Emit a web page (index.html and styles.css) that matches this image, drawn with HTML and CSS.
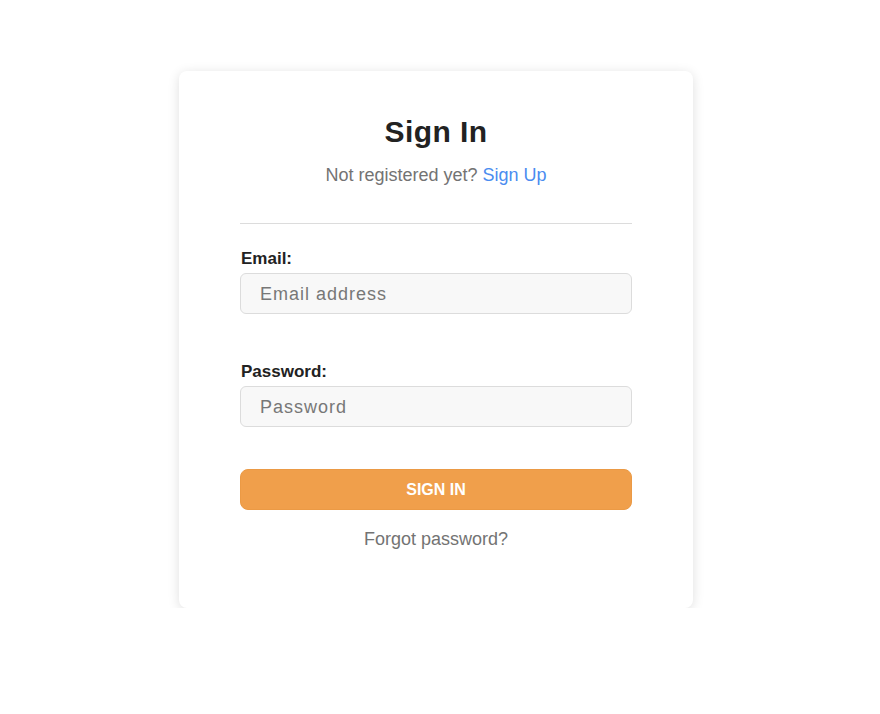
FILE: index.html
```html
<!DOCTYPE html>
<html lang="en">
  <head>
    <meta charset="UTF-8" />
    <meta name="viewport" content="width=device-width, initial-scale=1.0" />
    <title>Sign In</title>
    <link rel="stylesheet" href="styles.css">
  </head>
  <body>
    <div class="card">
      <h1 class="title">Sign In</h1>
      <p class="subtitle">Not registered yet? <a href="#" class="link">Sign Up</a></p>
      <hr class="divider" />
      <form name="signin">
        <label class="field" for="email">Email:</label>
        <input type="email" class="input-box" id="email" name="email" placeholder="Email address" />
        <label class="field field-pw" for="password">Password:</label>
        <input type="password" class="input-box" id="password" name="password" placeholder="Password" />
        <button type="submit" class="submit">SIGN IN</button>
      </form>
      <p class="forgot">Forgot password?</p>
    </div>
  </body>
</html>
```

FILE: styles.css
```css
* {
  padding: 0;
  margin: 0;
  box-sizing: border-box;
}
body {
  background: #fff;
  font-family: "Liberation Sans", Arial, sans-serif;
  color: #222;
}
.card {
  width: 514px;
  margin: 71px 0 0 179px;
  padding: 43px 61px 58px;
  background: #fff;
  border-radius: 8px;
  box-shadow: 0 2px 12px rgba(0, 0, 0, 0.13);
}
.title {
  font-size: 30px;
  line-height: 36px;
  font-weight: bold;
  letter-spacing: 0.4px;
  text-align: center;
  color: #222;
}
.subtitle {
  margin-top: 14px;
  font-size: 18px;
  line-height: 22px;
  text-align: center;
  color: #737373;
}
.link {
  color: #4a8cf0;
  text-decoration: none;
}
.divider {
  margin-top: 37px;
  border: 0;
  border-top: 1px solid #dcdcdc;
}
form {
  display: flex;
  flex-direction: column;
}
.field {
  margin-top: 24px;
  padding: 2px 0 0 1px;
  font-size: 17px;
  line-height: 18px;
  font-weight: bold;
  color: #222;
}
.field-pw {
  margin-top: 47px;
}
.input-box {
  margin-top: 5px;
  width: 100%;
  height: 41px;
  padding: 2px 19px 0;
  background: #f8f8f8;
  border: 1px solid #dcdcdc;
  border-radius: 6px;
  font-family: "Liberation Sans", Arial, sans-serif;
  font-size: 18px;
  letter-spacing: 1px;
  color: #333;
}
.input-box::placeholder {
  color: #777;
}
.submit {
  margin-top: 42px;
  height: 41px;
  width: 100%;
  background: #f09f4b;
  border: 1px solid #eb9a45;
  border-radius: 8px;
  color: #fff;
  font-family: "Liberation Sans", Arial, sans-serif;
  font-size: 16px;
  font-weight: bold;
}
.forgot {
  margin-top: 18px;
  font-size: 18px;
  line-height: 22px;
  text-align: center;
  color: #737373;
}
```
